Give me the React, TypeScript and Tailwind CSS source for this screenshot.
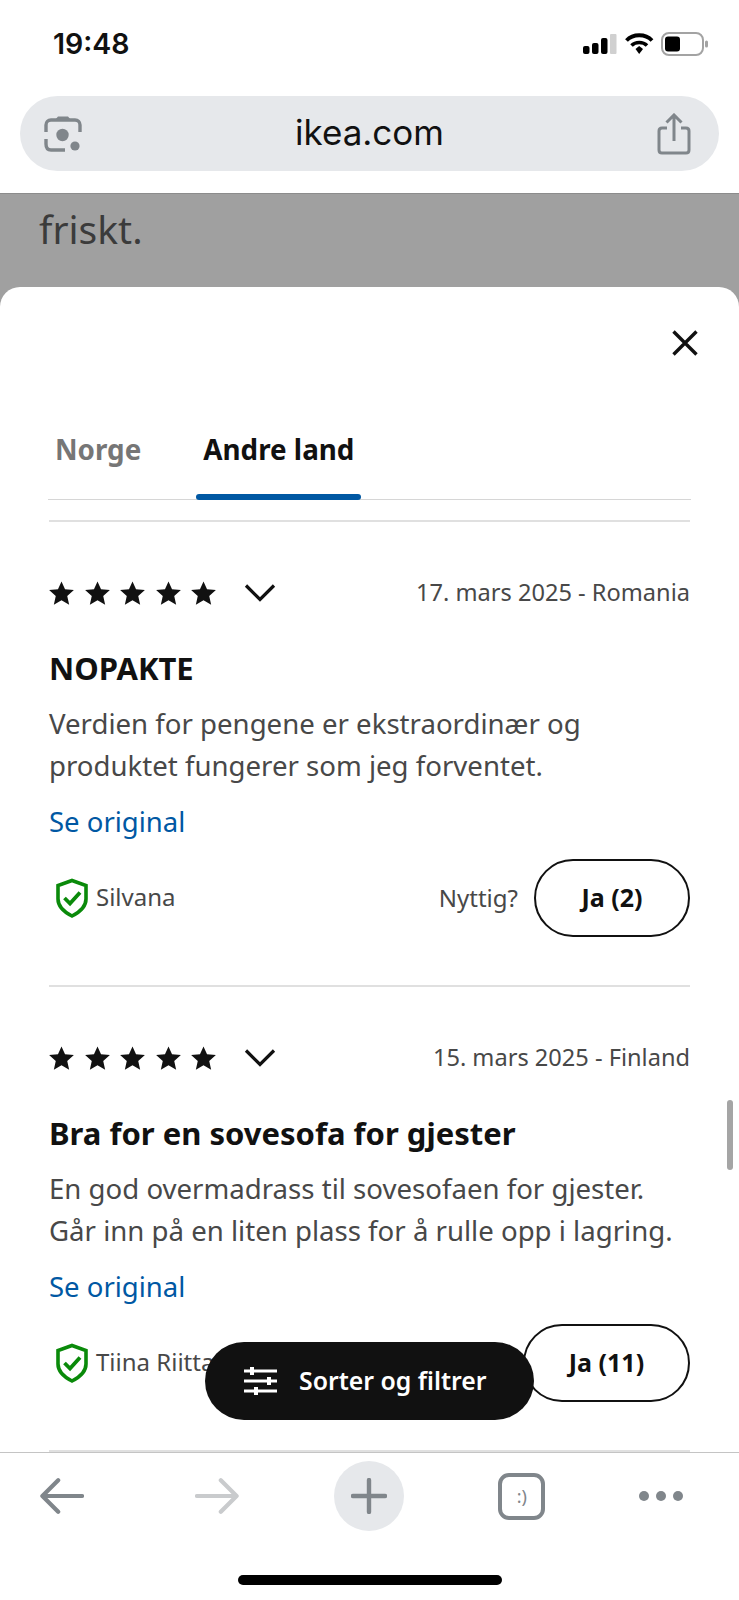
const noto = "font-['Noto_Sans',sans-serif]";

function Star() {
  return (
    <svg viewBox="0 0 24 24" className="w-[25px] h-[25px] fill-[#111111]">
      <path d="M12 .5 L15.4 7.8 L23.9 8.6 L17.5 14.3 L19.35 22.8 L12 18.4 L4.65 22.8 L6.5 14.3 L.1 8.6 L8.6 7.8 Z" />
    </svg>
  );
}

function Shield() {
  return (
    <svg viewBox="0 0 32 40" className="w-[32px] h-[40px]" fill="none">
      <path d="M16 2.5 L30 7.5 V21 C30 29 23 34.5 16 38 C9 34.5 2 29 2 21 V7.5 Z" stroke="#0a8a0a" strokeWidth="3.6" />
      <path d="M8.5 20 L14 25.5 L24 14.5" stroke="#0a8a0a" strokeWidth="3.8" />
    </svg>
  );
}

function Review(props: { date: string; title: string; lines: string[]; name: string; votes: string; btnW: string }) {
  return (
    <div className="border-b-2 border-[#e0e0e0] pt-[58px] pb-[48px]">
      <div className="flex items-center justify-between h-[26px]">
        <div className="flex items-center">
          <div className="flex gap-[10.5px]">
            <Star />
            <Star />
            <Star />
            <Star />
            <Star />
          </div>
          <svg viewBox="0 0 32 20" className="w-[32px] h-[20px] ml-[28px]" fill="none" stroke="#111111" strokeWidth="3.2">
            <path d="M2 2.5 L16 16.5 L30 2.5" />
          </svg>
        </div>
        <span className="text-[23.6px] text-[#484848] leading-none -mt-[1px]">{props.date}</span>
      </div>
      <h3 className="text-[31px] leading-[40px] font-bold text-[#111111] mt-[42px]">{props.title}</h3>
      <p className="text-[27.6px] leading-[42px] text-[#484848] mt-[14px] whitespace-nowrap">
        {props.lines[0]}
        <br />
        {props.lines[1]}
      </p>
      <div className="text-[27.5px] leading-[38px] text-[#0058a3] mt-[17px]">Se original</div>
      <div className="flex items-center justify-between mt-[18px] h-[78px]">
        <div className="flex items-center ml-[7px] gap-[8px]">
          <Shield />
          <span className="text-[24px] text-[#484848] leading-none mb-[2px]">{props.name}</span>
        </div>
        <div className="flex items-center gap-[16px]">
          <span className="text-[24px] text-[#484848]">Nyttig?</span>
          <button className={`${props.btnW} h-[78px] rounded-[39px] border-2 border-[#111111] bg-white text-[25px] font-bold text-[#111111]`}>
            Ja ({props.votes})
          </button>
        </div>
      </div>
    </div>
  );
}

export default function App() {
  return (
    <div className={`${noto} relative w-[739px] h-[1600px] overflow-hidden bg-white flex flex-col`}>
      {/* status bar */}
      <div className="h-[96px] flex-none flex items-start justify-between pl-[53px] pr-[30px] pt-[24px]">
        <span className="font-['Inter',sans-serif] text-[28.5px] leading-[40px] font-semibold text-[#111111]">19:48</span>
        <svg viewBox="0 0 126 30" className="w-[126px] h-[30px] mt-[6px]">
          <rect x="0" y="16" width="6.5" height="8" rx="2" fill="#000" />
          <rect x="9" y="13" width="6.5" height="11" rx="2" fill="#000" />
          <rect x="18" y="8" width="6.5" height="16" rx="2" fill="#000" />
          <rect x="27" y="4" width="6.5" height="20" rx="1" fill="#d0d0d0" />
          <path d="M43.5 10.5 C50 3.5 62.5 3.5 69 10.5" stroke="#000" strokeWidth="3.8" fill="none" />
          <path d="M48.5 15.5 C52.5 11.5 60 11.5 64 15.5" stroke="#000" strokeWidth="3.6" fill="none" />
          <path d="M52.5 19 L56.2 16 L60 19 L56.2 24 Z" fill="#000" />
          <rect x="79" y="3" width="41" height="22" rx="7" fill="none" stroke="#a3a3a3" strokeWidth="2" />
          <rect x="82" y="6.5" width="15" height="15" rx="3" fill="#000" />
          <rect x="122" y="10.5" width="3" height="7" rx="1.5" fill="#a3a3a3" />
        </svg>
      </div>

      {/* url bar */}
      <div className="h-[97px] flex-none px-[20px]">
        <div className="h-[75px] rounded-[38px] bg-[#e6e8eb] flex items-center justify-between pl-[24px] pr-[28px]">
          <svg viewBox="0 0 38 38" className="w-[38px] h-[38px]" fill="none">
            <path d="M11 5 L14 1.5 H24 L27 5 Z" fill="#80868b" />
            <path d="M2 17 V10 C2 7 4 5 7 5 H31 C34 5 36 7 36 10 V17" stroke="#80868b" strokeWidth="3.4" />
            <path d="M2 24 V29 C2 33 4 35 7 35 H21" stroke="#80868b" strokeWidth="3.4" />
            <circle cx="18.5" cy="20" r="6.2" fill="#80868b" />
            <circle cx="31" cy="31" r="4.6" fill="#80868b" />
          </svg>
          <span className="font-['Inter',sans-serif] text-[35px] leading-none text-[#111111] -mt-[2px]">ikea.com</span>
          <svg viewBox="0 0 34 42" className="w-[34px] h-[42px]" fill="none" stroke="#80868b" strokeWidth="3">
            <path d="M10 15 H5 C3 15 2 16 2 18 V37 C2 39 3 40 5 40 H29 C31 40 32 39 32 37 V18 C32 16 31 15 29 15 H24" />
            <path d="M17 28 V3 M9.5 9.5 L17 2 L24.5 9.5" />
          </svg>
        </div>
      </div>

      {/* page behind the sheet */}
      <div className="h-[94px] flex-none bg-[#a0a0a0] border-t border-[#8c8c8c] pl-[39px] pt-[5px]">
        <span className="text-[39px] leading-[60px] text-[#3b3b3b]">friskt.</span>
      </div>

      {/* sheet */}
      <div className="flex-1 min-h-0 overflow-hidden bg-[#a0a0a0]">
        <div className="h-full rounded-t-[20px] bg-white px-[49px] overflow-hidden">
          <div className="flex justify-end h-[113px] pt-[43px] -mr-[8px]">
            <svg viewBox="0 0 26 26" className="w-[26px] h-[26px]" fill="none" stroke="#111111" strokeWidth="3.4">
              <path d="M1.5 1.5 L24.5 24.5 M24.5 1.5 L1.5 24.5" />
            </svg>
          </div>
          <div className="flex gap-[62px] -mx-[1px] border-b border-[#d6d6d6] h-[100px] pl-[7px]">
            <span className="text-[27.8px] leading-[36px] pt-[31px] font-bold text-[#767676] h-full">Norge</span>
            <span className="relative text-[27.8px] leading-[36px] pt-[31px] font-bold text-[#111111] h-full">
              Andre land
              <span className="absolute -left-[7px] -right-[7px] bottom-[-1px] h-[6px] rounded-[3px] bg-[#0058a3]" />
            </span>
          </div>
          <div className="border-b-2 border-[#e0e0e0] h-[22px]" />
          <Review
            date="17. mars 2025 - Romania"
            title="NOPAKTE"
            lines={["Verdien for pengene er ekstraordinær og", "produktet fungerer som jeg forventet."]}
            name="Silvana"
            votes="2"
            btnW="w-[156px]"
          />
          <Review
            date="15. mars 2025 - Finland"
            title="Bra for en sovesofa for gjester"
            lines={["En god overmadrass til sovesofaen for gjester.", "Går inn på en liten plass for å rulle opp i lagring."]}
            name="Tiina Riitta"
            votes="11"
            btnW="w-[167px]"
          />
        </div>
      </div>

      {/* browser toolbar */}
      <div className="h-[148px] flex-none bg-white border-t border-[#c4c4c4] relative">
        <div className="h-[86px] flex items-center justify-between pl-[40px] pr-[55px]">
          <svg viewBox="0 0 46 38" className="w-[44px] h-[38px]" fill="none" stroke="#80868b" strokeWidth="4.4" strokeLinecap="round" strokeLinejoin="round">
            <path d="M44 19 H3 M19 2.5 L2.5 19 L19 35.5" />
          </svg>
          <svg viewBox="0 0 46 38" className="w-[44px] h-[38px] ml-[64px]" fill="none" stroke="#c9cbcd" strokeWidth="4.4" strokeLinecap="round" strokeLinejoin="round">
            <path d="M2 19 H43 M27 2.5 L43.5 19 L27 35.5" />
          </svg>
          <div className="w-[70px] h-[70px] rounded-full bg-[#e6e8eb] flex items-center justify-center ml-[48px]">
            <svg viewBox="0 0 36 36" className="w-[36px] h-[36px]" fill="none" stroke="#80868b" strokeWidth="4.4" strokeLinecap="round">
              <path d="M18 2 V34 M2 18 H34" />
            </svg>
          </div>
          <div className="w-[47px] h-[47px] ml-[48px] rounded-[11px] border-[4px] border-[#80868b] flex items-center justify-center text-[18px] leading-none text-[#80868b]">
            :)
          </div>
          <svg viewBox="0 0 46 14" className="w-[46px] h-[14px] ml-[46px]" fill="#80868b">
            <circle cx="6" cy="7" r="5" />
            <circle cx="23" cy="7" r="5" />
            <circle cx="40" cy="7" r="5" />
          </svg>
        </div>
        <div className="mx-auto mt-[36px] w-[264px] h-[10px] rounded-full bg-black" />
      </div>

      {/* floating over the sheet */}
      <div className="absolute left-[205px] top-[1342px] w-[329px] h-[78px] rounded-[39px] bg-[#111111] flex items-center pl-[39px] gap-[22px]">
        <svg viewBox="0 0 33 28" className="w-[33px] h-[28px]" fill="none" stroke="#fff" strokeWidth="3">
          <path d="M0 4 H33 M0 14 H33 M0 24 H33" />
          <path d="M8 0 V8 M25 10 V18 M12 20 V28" strokeWidth="4" />
        </svg>
        <span className="text-[24.8px] font-semibold text-white">Sorter og filtrer</span>
      </div>
      <div className="absolute left-[727px] top-[1100px] w-[6px] h-[70px] rounded-full bg-[#a5a5a5]" />
    </div>
  );
}
